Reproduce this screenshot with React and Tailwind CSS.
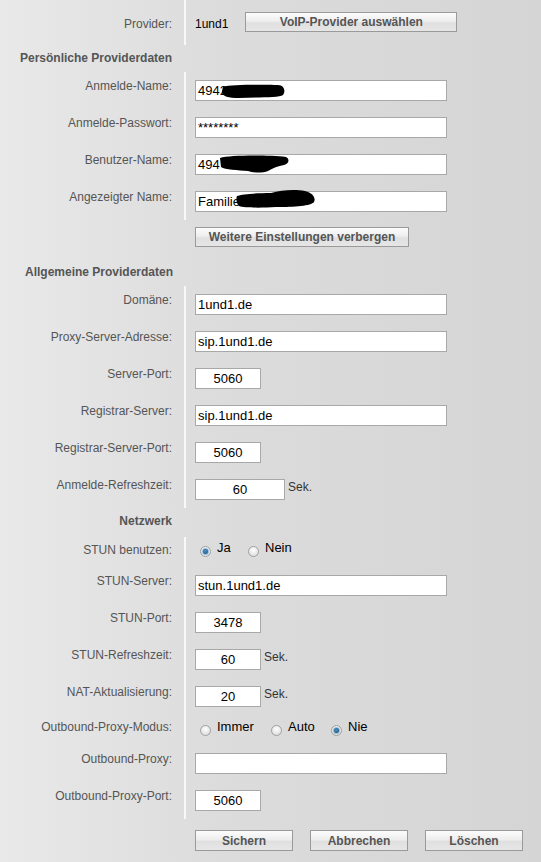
import React from "react";

const Label = ({ children, pt = "pt-[7px]" }) => (
  <div className={`w-[186px] shrink-0 border-r-2 border-[#f8f8f8] pr-[12px] text-right text-[12px] leading-[14px] text-[#555] ${pt}`}>
    {children}
  </div>
);

const Field = ({ value = "", w = "w-[252px]", center = false, children }) => (
  <div
    className={`relative ${w} h-[21px] border border-[#a8a8a8] bg-white px-[2px] text-[13px] leading-[19px] text-black ${
      center ? "text-center" : ""
    }`}
  >
    {value}
    {children}
  </div>
);

const Btn = ({ children, w, h = "h-[20px]" }) => (
  <div
    className={`${w} ${h} flex shrink-0 items-center justify-center border border-[#9a9a9a] bg-[linear-gradient(#fcfcfc,#eeeeee_45%,#e0e0e0_55%,#e6e6e6)] text-[12px] font-bold text-[#555]`}
  >
    {children}
  </div>
);

const Radio = ({ checked }) => (
  <span className="mt-[6px] flex h-[11px] w-[11px] shrink-0 items-center justify-center rounded-full border border-[#a0a0a0] bg-[radial-gradient(circle_at_50%_35%,#ffffff,#d6d6d6)]">
    {checked && (
      <span className="h-[7px] w-[7px] rounded-full border border-[#7fb0d6] bg-[radial-gradient(circle_at_45%_40%,#4f93c4,#154a70)]" />
    )}
  </span>
);

const Option = ({ checked, label, w }) => (
  <div className={`flex items-start ${w} pl-[5px]`}>
    <Radio checked={checked} />
    <span className="ml-[6px] text-[13px] leading-[16px] text-black">{label}</span>
  </div>
);

const InputRow = ({ label, children }) => (
  <div className="flex h-[37px]">
    <Label>{label}</Label>
    <div className="flex items-start pl-[9px] pt-[8px]">{children}</div>
  </div>
);

const Sek = () => <span className="ml-[3px] mt-[1px] text-[12px] leading-[14px] text-[#333]">Sek.</span>;

const Blob = ({ className, w, h, d }) => (
  <svg className={`pointer-events-none absolute overflow-visible ${className}`} width={w} height={h} viewBox={`0 0 ${w} ${h}`}>
    <path d={d} fill="#000" />
  </svg>
);

export default function App() {
  return (
    <div className="min-h-[862px] w-[541px] bg-[linear-gradient(to_right,#e9e9e9,#dcdcdc_40%,#d5d5d5)] font-['Liberation_Sans',Arial,sans-serif]">
      {/* Provider */}
      <div className="flex h-[45px]">
        <Label pt="pt-[17px]">Provider:</Label>
        <div className="flex items-start pl-[9px] pt-[12px]">
          <span className="mt-[5px] text-[12px] leading-[14px] text-black">1und1</span>
          <div className="ml-[17px]">
            <Btn w="w-[212px]">VoIP-Provider auswählen</Btn>
          </div>
        </div>
      </div>

      <div className="h-[27px] pl-[20px] pt-[6px] text-[12px] font-bold leading-[14px] text-[#555]">
        Persönliche Providerdaten
      </div>

      <InputRow label="Anmelde-Name:">
        <Field value="4942">
          <Blob
            className="left-[25px] top-[3px]"
            w={64}
            h={14}
            d="M2 3 C10 0 46 1 57 1 C63 1 65 7 62 11 C58 14 38 13 18 14 C7 14 0 12 1 7 Z"
          />
        </Field>
      </InputRow>
      <InputRow label="Anmelde-Passwort:">
        <Field value="********" />
      </InputRow>
      <InputRow label="Benutzer-Name:">
        <Field value="494">
          <Blob
            className="left-[24px] top-[0px]"
            w={69}
            h={18}
            d="M0 3 C10 0 48 0 66 2 C70 4 69 9 64 10 C58 11 53 13 48 16 C43 18 33 18 28 16 C18 15 5 15 1 12 Z"
          />
        </Field>
      </InputRow>
      <InputRow label="Angezeigter Name:">
        <Field value="Familie">
          <Blob
            className="left-[41px] top-[-2px]"
            w={78}
            h={18}
            d="M0 6 C5 4 20 3 34 3 C44 0 58 -1 68 1 C76 3 79 8 77 12 C74 16 58 17 39 17 C24 18 8 18 2 16 C-1 13 -1 8 0 6 Z"
          />
        </Field>
      </InputRow>

      <div className="h-[38px] pl-[195px] pt-[7px]">
        <Btn w="w-[214px]">Weitere Einstellungen verbergen</Btn>
      </div>

      <div className="h-[28px] pl-[25px] pt-[7px] text-[12px] font-bold leading-[14px] text-[#555]">
        Allgemeine Providerdaten
      </div>

      <InputRow label="Domäne:">
        <Field value="1und1.de" />
      </InputRow>
      <InputRow label="Proxy-Server-Adresse:">
        <Field value="sip.1und1.de" />
      </InputRow>
      <InputRow label="Server-Port:">
        <Field value="5060" w="w-[66px]" center />
      </InputRow>
      <InputRow label="Registrar-Server:">
        <Field value="sip.1und1.de" />
      </InputRow>
      <InputRow label="Registrar-Server-Port:">
        <Field value="5060" w="w-[66px]" center />
      </InputRow>
      <InputRow label="Anmelde-Refreshzeit:">
        <Field value="60" w="w-[90px]" center />
        <Sek />
      </InputRow>

      <div className="h-[29px] w-[184px] pr-[12px] pt-[6px] text-right text-[12px] font-bold leading-[14px] text-[#555]">
        Netzwerk
      </div>

      <div className="flex h-[30px]">
        <Label pt="pt-[6px]">STUN benutzen:</Label>
        <div className="flex items-start pl-[9px] pt-[3px]">
          <Option checked label="Ja" w="w-[48px]" />
          <Option label="Nein" w="w-[60px]" />
        </div>
      </div>

      <InputRow label="STUN-Server:">
        <Field value="stun.1und1.de" />
      </InputRow>
      <InputRow label="STUN-Port:">
        <Field value="3478" w="w-[66px]" center />
      </InputRow>
      <InputRow label="STUN-Refreshzeit:">
        <Field value="60" w="w-[66px]" center />
        <Sek />
      </InputRow>
      <InputRow label="NAT-Aktualisierung:">
        <Field value="20" w="w-[66px]" center />
        <Sek />
      </InputRow>

      <div className="flex h-[30px]">
        <Label pt="pt-[5px]">Outbound-Proxy-Modus:</Label>
        <div className="flex items-start pl-[9px] pt-[4px]">
          <Option label="Immer" w="w-[71px]" />
          <Option label="Auto" w="w-[60px]" />
          <Option checked label="Nie" w="w-[60px]" />
        </div>
      </div>

      <InputRow label="Outbound-Proxy:">
        <Field value="" />
      </InputRow>
      <InputRow label="Outbound-Proxy-Port:">
        <Field value="5060" w="w-[66px]" center />
      </InputRow>

      <div className="flex gap-[17px] pl-[195px] pt-[11px]">
        <Btn w="w-[98px]" h="h-[21px]">Sichern</Btn>
        <Btn w="w-[98px]" h="h-[21px]">Abbrechen</Btn>
        <Btn w="w-[98px]" h="h-[21px]">Löschen</Btn>
      </div>
    </div>
  );
}
